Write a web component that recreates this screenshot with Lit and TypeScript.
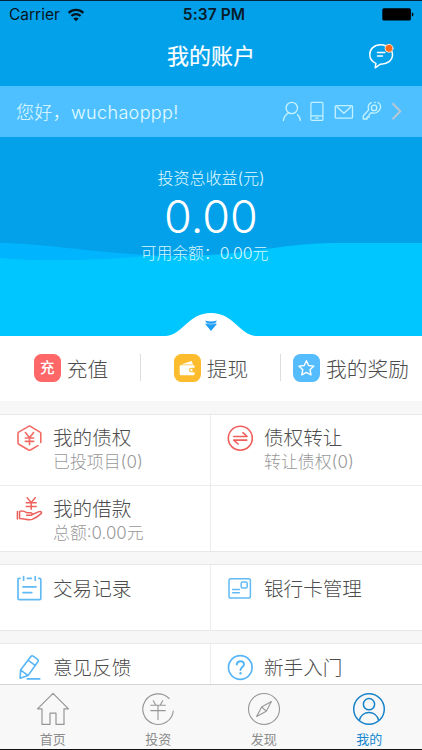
import { LitElement, html, svg, css, nothing } from "lit";
import { customElement, property } from "lit/decorators.js";

const icons: Record<string, unknown> = {
  wifi: svg`<svg width="18" height="14" viewBox="0 0 18 14" fill="none" stroke="#06131d" stroke-width="2.2"><path d="M1.6 4.9C5.8.9 12.2.9 16.4 4.9"/><path d="M4.4 7.9c2.6-2.4 6.6-2.4 9.2 0"/><path d="M9 13.2 6.3 10.4c1.5-1.3 3.9-1.3 5.4 0z" fill="#06131d" stroke="none"/></svg>`,
  battery: svg`<svg width="32" height="13" viewBox="0 0 32 13"><rect x=".3" y=".3" width="28.6" height="12.2" rx="1.6" fill="#000"/><path d="M29.8 4.6c2.2.3 2.2 3.6 0 3.9z" fill="#000"/></svg>`,
  chat: svg`<svg width="26" height="27" viewBox="0 0 26 27" fill="none" stroke="#fff" stroke-width="1.5" stroke-linecap="round" stroke-linejoin="round"><path d="M17.6 2.7C15.8 2 14.4 1.8 12.5 1.8 6 1.8 1.8 6.2 1.8 11.5c0 4.3 2.5 7.4 6.1 8.9l-.7 4.4 5.2-3.6c7 .2 12.1-3.9 12.1-9.4 0-1.5-.3-2.6-.8-3.8"/><path d="M9.5 9.6h7.3M9.5 13.1h5"/><circle cx="21" cy="5.3" r="4" fill="#f96d1c" stroke="#ffe6d5" stroke-width=".9"/></svg>`,
  user: svg`<svg width="20" height="21" viewBox="0 0 20 21" fill="none" stroke="#c5f2ff" stroke-width="1.3" stroke-linecap="round"><circle cx="9.8" cy="7" r="5.7"/><path d="M1.4 19.5c.4-3.4 2.1-5.9 4.9-7.4M15.3 13.6c1.6 1.3 2.7 3.2 3 5.7"/></svg>`,
  phone: svg`<svg width="14" height="21" viewBox="0 0 14 21" fill="none" stroke="#c5f2ff" stroke-width="1.2"><rect x=".9" y="1.4" width="12" height="18" rx="1"/><path d="M1 14.8h12M5.2 17.1h3.4"/></svg>`,
  mail: svg`<svg width="20.5" height="21" viewBox="-1.5 0 20.5 21" fill="none" stroke="#c5f2ff" stroke-width="1.3" stroke-linejoin="round"><rect x=".8" y="4.6" width="17.2" height="12.6" rx="1"/><path d="m2 5.6 7.4 6.6L16.8 5.6"/></svg>`,
  key: svg`<svg width="20" height="21" viewBox="0 0 20 21" fill="none" stroke="#c5f2ff" stroke-width="1.3" stroke-linecap="round" stroke-linejoin="round"><path d="M9.3 1.7C6.6 2.6 5.5 5.8 6.7 8.9L1.3 14.7v3.3h3.8v-2h2v-2.2l2.2-2.1c3.5 1.4 8-.5 9.1-4.5.8-2.7-.6-4.7-2.4-5.7M12.6 1.3h.7"/><circle cx="12.1" cy="6.9" r="2.7"/></svg>`,
  chevron: svg`<svg width="12" height="21" viewBox="0 0 12 21" fill="none" stroke="#b5c7d4" stroke-width="2"><path d="m1.5 2.3 7.8 8-7.8 8"/></svg>`,
  recharge: svg`<svg width="27" height="28" viewBox="0 0 27 28"><rect width="27" height="28" rx="7.5" fill="#fd6767"/></svg>`,
  wallet: svg`<svg width="27" height="28" viewBox="0 0 27 28"><rect width="27" height="28" rx="7.5" fill="#fdbc2d"/><path d="M7 10.6 17.6 7l1.5 3.6z" fill="#fff"/><path d="M6.8 11.2h12.6c.8 0 1.2.5 1.2 1.2v1.4h-3.4a2.2 2.2 0 0 0 0 4.4h3.4V20c0 .8-.5 1.2-1.2 1.2H6.8c-.7 0-1.1-.5-1.1-1.2v-7.6c0-.7.4-1.2 1.1-1.2z" fill="#fff"/><circle cx="17.4" cy="16" r="1.2" fill="#fff"/></svg>`,
  star: svg`<svg width="27" height="28" viewBox="0 0 27 28"><rect width="27" height="28" rx="7.5" fill="#55bcfd"/><path d="m13.4 6.7 2.2 4.8 5.3.6-3.9 3.6 1 5.3-4.6-2.6-4.6 2.6 1-5.3-3.9-3.6 5.3-.6z" fill="none" stroke="#fff" stroke-width="1.4" stroke-linejoin="round"/></svg>`,
  hex: svg`<svg width="27" height="27" viewBox="0 0 27 27" fill="none" stroke="#f26b65" stroke-width="1.6" stroke-linecap="round" stroke-linejoin="round"><path d="M2 17.5V8.2Q2 7.5 2.7 7.1L12.6 1.4q.9-.5 1.8 0L24 7.1q.8.4.8 1.1V17.5M2 10v7.5q0 1.4.8 1.8l9.8 5.7q.9.4 1.8 0l7.6-4.4"/><path d="m9.4 7.5 4.1 5.3 4.1-5.3M9.3 13h8.4M9.3 16.4h8.4M13.5 13v6.7"/></svg>`,
  swap: svg`<svg width="27" height="27" viewBox="0 0 27 27" fill="none" stroke="#ee5f5c" stroke-width="1.6" stroke-linecap="round" stroke-linejoin="round"><circle cx="13.3" cy="13.2" r="12"/><path d="M6.8 11.5h13.3l-4.2-3.8M19.8 15.1H6.7l4.4 3.9"/></svg>`,
  loan: svg`<svg width="27" height="27" viewBox="0 0 27 27" fill="none" stroke="#ee625d" stroke-width="1.5" stroke-linecap="round" stroke-linejoin="round"><path d="m11.2 1.7 4 4.9 4-4.9M10.2 6.8h10M10.2 10.4h10M15.2 6.8v6.4"/><path d="M1.4 15.4v7.6M3.6 15.4v7.2M3.6 15.4c3-.8 5.2.1 7.1 1.3h4c1.8 0 2 2.6 0 2.6h-4.1M16.4 18.5l6.6-2.9c2-.7 3.4.8 1.8 2.3-2.6 2.4-5.6 4.2-8.6 5.5-3.7 1.4-7.5-.9-12.6-.8"/></svg>`,
  record: svg`<svg width="27" height="27" viewBox="0 0 27 27" fill="none" stroke="#62baf5" stroke-width="1.7" stroke-linecap="round" stroke-linejoin="round"><path d="M4 3.3H3.2Q2 3.3 2 4.6v18.8q0 1.3 1.2 1.3h20.4q1.2 0 1.2-1.3V4.6q0-1.3-1.2-1.3h-.8M11.3 3.3h4M7.6 1.5v3.7M19.2 1.5v3.7M7 11.8h13M7 17.6h8.8"/></svg>`,
  card: svg`<svg width="27" height="27" viewBox="0 0 27 27" fill="none" stroke="#62baf5" stroke-width="1.5" stroke-linecap="round"><rect x="2" y="3.8" width="21.4" height="19.2" rx="1.8"/><rect x="14.2" y="7" width="6" height="6" rx="1.5"/><path d="M5.7 14.6h6.7M5.7 17.7h6.7"/></svg>`,
  pencil: svg`<svg width="27" height="27" viewBox="0 0 27 27" fill="none" stroke="#58b6f6" stroke-width="1.6" stroke-linecap="round" stroke-linejoin="round"><path d="M14.8 2.6q1-1.3 2.4-.4l4.4 3.1q1.3 1 .4 2.2L12 21.6l-7.9 2.7.5-8.2zM12.3 6.4l6.8 4.9M4.7 16.2l7.2 5.2M11.2 24.9h12.6"/></svg>`,
  help: svg`<svg width="27" height="27" viewBox="0 0 27 27" fill="none" stroke="#58b6f6" stroke-width="1.7" stroke-linecap="round"><circle cx="13.3" cy="13.5" r="11.8"/><path d="M9.8 10.6c.1-4.5 7.2-4.6 7.2-.3 0 2.7-3.5 2.8-3.5 5.8" stroke-width="2"/><path d="M13.5 19.2v.2" stroke-width="2.4"/></svg>`,
  home: svg`<svg width="34" height="34" viewBox="0 0 34 34" fill="none" stroke="#969696" stroke-width="1.2" stroke-linejoin="round"><path d="m17 1.3 15.5 15.5H28v15.6h-8V21.2h-6v11.2H6V16.8H1.5z"/></svg>`,
  invest: svg`<svg width="34" height="34" viewBox="0 0 34 34" fill="none" stroke="#969696" stroke-width="1.1" stroke-linecap="round"><path d="M28.1 6.5A15.3 15.3 0 1 0 32.3 19"/><path d="m12.3 8.8 2.4 4.2M21.7 8.8 19.3 13M9.7 13.2h14.6M9.7 18.6h14.6M17 13.2v14.2"/></svg>`,
  compass: svg`<svg width="34" height="34" viewBox="0 0 34 34" fill="none" stroke="#969696" stroke-width="1.1" stroke-linejoin="round"><circle cx="17" cy="17" r="15.5"/><path d="M24.4 9.6 14.6 15 9.6 24.4l9.7-5.2zM14.6 15l4.7 4.2"/></svg>`,
  me: svg`<svg width="34" height="34" viewBox="0 0 34 34" fill="none" stroke="#1783ca" stroke-width="1.5"><circle cx="17" cy="17" r="15.3"/><circle cx="17" cy="12.2" r="5.6"/><path d="M7.2 28.6c2.4-10.8 17.2-10.8 19.6 0"/></svg>`,
};

@customElement("menu-cell")
class MenuCell extends LitElement {
  @property() icon = "";
  @property() label = "";
  @property() note = "";

  static styles = css`
    :host { display: flex; align-items: flex-start; gap: 10px; padding: 10px 0 0 16px; min-width: 0; overflow: hidden; }
    .icon { display: flex; width: 27px; height: 27px; flex: none; }
    .label { font-size: 19.6px; line-height: 27px; color: #4c4c4c; white-space: nowrap; }
    .label:only-child { line-height: 29px; }
    .note { font-size: 16.9px; line-height: 20px; color: #989898; white-space: nowrap; }
  `;

  render() {
    return html`<div class="icon">${icons[this.icon]}</div>
      <div>
        <div class="label">${this.label}</div>
        ${this.note ? html`<div class="note">${this.note}</div>` : nothing}
      </div>`;
  }
}

@customElement("app-root")
class AppRoot extends LitElement {
  static styles = css`
    :host { display: flex; flex-direction: column; box-sizing: border-box; width: 422px; height: 750px; overflow: hidden; background: #f7f7f7; border-top: 1px solid #04223f; border-bottom: 1px solid #111; font-family: Inter, "Noto Sans CJK SC", sans-serif; font-weight: 300; }
    svg { display: block; flex: none; }
    .top { flex: none; height: 85px; background: #02a1ea; }
    .status { display: grid; grid-template-columns: 1fr auto 1fr; align-items: center; height: 27px; padding: 0 8px 0 9px; color: #06131d; font-size: 15.5px; }
    .carrier { display: flex; align-items: center; gap: 7px; font-weight: 400; }
    .time { font-weight: 600; color: #081b2a; margin-left: 5px; letter-spacing: .1px; }
    .battery { justify-self: end; }
    .nav { display: grid; grid-template-columns: 1fr auto 1fr; align-items: center; height: 56px; padding-right: 28px; padding-left: 28px; }
    .title { grid-column: 2; color: #fff; font-size: 22px; line-height: 32px; font-weight: 400; -webkit-text-stroke: .2px #fff; }
    .chat { justify-self: end; }
    .greet { flex: none; display: flex; align-items: center; justify-content: space-between; height: 51px; padding: 0 19px 0 16px; background: #4fc0ff; color: #e4fcff; font-size: 18px; }
    .name { letter-spacing: .35px; margin-bottom: 2px; }
    .tools { display: flex; align-items: center; gap: 8.7px; }
    .hero { flex: none; position: relative; height: 199px; background: #02a1ea; color: #fff; text-align: center; }
    .wave { position: absolute; inset: 0; }
    .sum { position: relative; display: flex; flex-direction: column; align-items: center; padding-top: 28.5px; }
    .cap { font-size: 16px; line-height: 24px; color: #e2faff; }
    .amount { font-size: 45px; line-height: 55px; font-weight: 350; margin: -1px 0 1px; }
    .left { font-size: 15.8px; line-height: 20px; color: #d5f8ff; margin: -1px 13px 0 0; }
    .actions { flex: none; display: grid; grid-template-columns: 140px 140px 142px; height: 65px; background: #fff; }
    .action { display: flex; align-items: center; gap: 6px; padding: 0 0 1px 2px; color: #4c4c4c; font-size: 20.7px; white-space: nowrap; justify-content: center; }
    .action:last-child { padding-left: 0; }
    .action + .action { background: linear-gradient(#ddd, #ddd) left 18px / 1px 27px no-repeat; }
    .badge { display: grid; place-items: center; }
    .badge > * { grid-area: 1 / 1; }
    .glyph { color: #fff; font-size: 14.5px; line-height: 28px; font-weight: 500; }
    .group { flex: none; display: grid; grid-template-columns: 211px 211px; margin-top: 12px; border-top: 1px solid #e8e8e8; border-bottom: 1px solid #e8e8e8; background: #fff; }
    .group:first-child { margin-top: 13px; }
    menu-cell, .blank { height: 70px; box-sizing: border-box; }
    .group > :nth-child(odd) { border-right: 1px solid #ececec; }
    .group > :nth-child(n + 3) { border-top: 1px solid #ececec; height: 66px; }
    .short menu-cell { height: 65px; }
    .clip { flex: 1; min-height: 0; overflow: hidden; display: flex; flex-direction: column; }
    .tabs { flex: none; display: grid; grid-template-columns: repeat(4, 1fr); height: 65px; box-sizing: border-box; border-top: 1px solid #d5d5d5; background: #f8f8f8; }
    .tab { display: flex; flex-direction: column; align-items: center; padding-top: 7px; color: #8c8c8c; font-size: 13px; line-height: 17px; gap: 5px; font-weight: 400; }
    .on { color: #1688cf; }
  `;

  render() {
    return html`
      <div class="top">
        <div class="status">
          <div class="carrier">Carrier ${icons.wifi}</div>
          <div class="time">5:37 PM</div>
          <div class="battery">${icons.battery}</div>
        </div>
        <div class="nav"><div class="title">我的账户</div><div class="chat">${icons.chat}</div></div>
      </div>
      <div class="greet">
        <div class="name">您好，wuchaoppp!</div>
        <div class="tools">${icons.user}${icons.phone}${icons.mail}${icons.key}${icons.chevron}</div>
      </div>
      <div class="hero">
        <svg class="wave" width="422" height="199" viewBox="0 0 422 199">
          <path d="M0 106C40 106 90 115 145 118L180 119V130H0z" fill="#00b5fd"/>
          <path d="M0 121C40 125 110 123 145 119C180 119 205 119 235 116C270 112 300 106 335 106H422V199H0z" fill="#00c6ff"/>
          <path d="M166 199C184 197 188 176 211 176S238 197 256 199z" fill="#fff"/>
          <path d="M205 183.5q6 2 12 0l-2.2 3.2h2.2l-6 7.3-6-7.3h2.2z" fill="#1f9df5"/>
          <path d="M206.5 186.4q4.5 1.4 9 0" fill="none" stroke="#a9dcff" stroke-width=".8"/>
        </svg>
        <div class="sum">
          <div class="cap">投资总收益(元)</div>
          <div class="amount">0.00</div>
          <div class="left">可用余额：0.00元</div>
        </div>
      </div>
      <div class="actions">
        <div class="action"><div class="badge">${icons.recharge}<span class="glyph">充</span></div>充值</div>
        <div class="action">${icons.wallet}提现</div>
        <div class="action">${icons.star}我的奖励</div>
      </div>
      <div class="clip">
        <div class="group">
          <menu-cell icon="hex" label="我的债权" note="已投项目(0)"></menu-cell>
          <menu-cell icon="swap" label="债权转让" note="转让债权(0)"></menu-cell>
          <menu-cell icon="loan" label="我的借款" note="总额:0.00元"></menu-cell>
          <div class="blank"></div>
        </div>
        <div class="group short">
          <menu-cell icon="record" label="交易记录"></menu-cell>
          <menu-cell icon="card" label="银行卡管理"></menu-cell>
        </div>
        <div class="group short">
          <menu-cell icon="pencil" label="意见反馈"></menu-cell>
          <menu-cell icon="help" label="新手入门"></menu-cell>
        </div>
      </div>
      <div class="tabs">
        <div class="tab">${icons.home}<span>首页</span></div>
        <div class="tab">${icons.invest}<span>投资</span></div>
        <div class="tab">${icons.compass}<span>发现</span></div>
        <div class="tab on">${icons.me}<span>我的</span></div>
      </div>`;
  }
}
